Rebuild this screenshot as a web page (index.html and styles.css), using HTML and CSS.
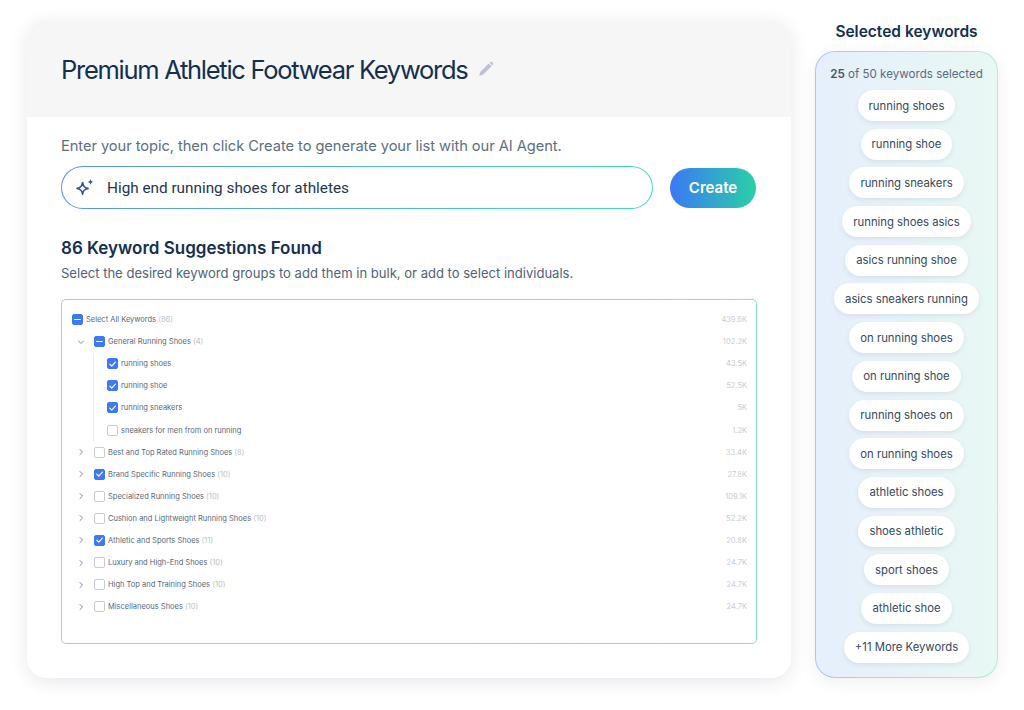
FILE: index.html
```html
<!DOCTYPE html>
<html lang="en">
<head>
<meta charset="utf-8">
<title>Premium Athletic Footwear Keywords</title>
<link rel="stylesheet" href="styles.css">
</head>
<body>
<svg class="defs" width="0" height="0" aria-hidden="true">
  <defs>
    <symbol id="check" viewBox="0 0 10 10"><path d="M2 5.2 4.2 7.4 8.2 2.8" fill="none" stroke="#fff" stroke-width="1.3" stroke-linecap="round" stroke-linejoin="round"/></symbol>
    <symbol id="right" viewBox="0 0 8 8"><path d="M3 1.5 5.5 4 3 6.5" fill="none" stroke="#7c8a9c" stroke-width="1" stroke-linecap="round" stroke-linejoin="round"/></symbol>
  </defs>
</svg>
<main class="page">
  <section class="card">
    <header class="card-head">
      <h1 class="title">Premium Athletic Footwear Keywords</h1>
      <svg class="pencil" viewBox="0 0 16 16" width="16" height="16"><path d="M1.2 14.8 2.2 11 10.8 2.4 13.6 5.2 5 13.8Z" fill="#bcc3cc"/><path d="M11.6 1.6 12.4.9a1 1 0 0 1 1.4 0l1.3 1.3a1 1 0 0 1 0 1.4l-.8.8Z" fill="#bcc3cc"/></svg>
    </header>
    <div class="card-body">
      <p class="lead">Enter your topic, then click Create to generate your list with our AI Agent.</p>
      <div class="search-row">
        <div class="search">
          <svg class="spark" viewBox="0 0 18 18" width="22" height="22"><path d="M7 4.5C7.5 7.6 8.4 8.5 11.5 9.3 8.4 10 7.5 11 7 14 6.500 11 5.600 10 2.500 9.300 5.600 8.500 6.500 7.600 7 4.500Z" fill="none" stroke="#3553b5" stroke-width="1.400" stroke-linejoin="round"/><path d="M13.500 1.500C13.800 3.200 14.300 3.700 16 4 14.300 4.300 13.800 4.800 13.500 6.500 13.200 4.800 12.700 4.300 11 4 12.700 3.700 13.200 3.200 13.500 1.500Z" fill="#3553b5"/></svg>
          <span class="search-text">High end running shoes for athletes</span>
        </div>
        <button class="create" type="button">Create</button>
      </div>
      <h2 class="found">86 Keyword Suggestions Found</h2>
      <p class="hint">Select the desired keyword groups to add them in bulk, or add to select individuals.</p>
      <div class="tree">
        <div class="row"><span class="box minus"></span><span class="label">Select All Keywords <i>(86)</i></span><span class="vol">439.6K</span></div>
        <div class="row l1"><svg class="chev" viewBox="0 0 8 8"><path d="M1.500 3 4 5.500 6.500 3" fill="none" stroke="#7c8a9c" stroke-width="1" stroke-linecap="round" stroke-linejoin="round"/></svg><span class="box minus"></span><span class="label">General Running Shoes <i>(4)</i></span><span class="vol">102.2K</span></div>
        <div class="children">
          <div class="row"><span class="box on"><svg><use href="#check"/></svg></span><span class="label">running shoes</span><span class="vol">43.5K</span></div>
          <div class="row"><span class="box on"><svg><use href="#check"/></svg></span><span class="label">running shoe</span><span class="vol">52.5K</span></div>
          <div class="row"><span class="box on"><svg><use href="#check"/></svg></span><span class="label">running sneakers</span><span class="vol">5K</span></div>
          <div class="row"><span class="box"></span><span class="label">sneakers for men from on running</span><span class="vol">1.2K</span></div>
        </div>
        <div class="row l1"><svg class="chev"><use href="#right"/></svg><span class="box"></span><span class="label">Best and Top Rated Running Shoes <i>(8)</i></span><span class="vol">33.4K</span></div>
        <div class="row l1"><svg class="chev"><use href="#right"/></svg><span class="box on"><svg><use href="#check"/></svg></span><span class="label">Brand Specific Running Shoes <i>(10)</i></span><span class="vol">27.8K</span></div>
        <div class="row l1"><svg class="chev"><use href="#right"/></svg><span class="box"></span><span class="label">Specialized Running Shoes <i>(10)</i></span><span class="vol">109.1K</span></div>
        <div class="row l1"><svg class="chev"><use href="#right"/></svg><span class="box"></span><span class="label">Cushion and Lightweight Running Shoes <i>(10)</i></span><span class="vol">52.2K</span></div>
        <div class="row l1"><svg class="chev"><use href="#right"/></svg><span class="box on"><svg><use href="#check"/></svg></span><span class="label">Athletic and Sports Shoes <i>(11)</i></span><span class="vol">20.8K</span></div>
        <div class="row l1"><svg class="chev"><use href="#right"/></svg><span class="box"></span><span class="label">Luxury and High-End Shoes <i>(10)</i></span><span class="vol">24.7K</span></div>
        <div class="row l1"><svg class="chev"><use href="#right"/></svg><span class="box"></span><span class="label">High Top and Training Shoes <i>(10)</i></span><span class="vol">24.7K</span></div>
        <div class="row l1"><svg class="chev"><use href="#right"/></svg><span class="box"></span><span class="label">Miscellaneous Shoes <i>(10)</i></span><span class="vol">24.7K</span></div>
      </div>
    </div>
  </section>
  <aside class="side">
    <h2 class="side-title">Selected keywords</h2>
    <div class="panel">
      <p class="count"><b>25</b> of 50 keywords selected</p>
      <ul class="chips">
        <li class="chip">running shoes</li>
        <li class="chip">running shoe</li>
        <li class="chip">running sneakers</li>
        <li class="chip">running shoes asics</li>
        <li class="chip">asics running shoe</li>
        <li class="chip">asics sneakers running</li>
        <li class="chip">on running shoes</li>
        <li class="chip">on running shoe</li>
        <li class="chip">running shoes on</li>
        <li class="chip">on running shoes</li>
        <li class="chip">athletic shoes</li>
        <li class="chip">shoes athletic</li>
        <li class="chip">sport shoes</li>
        <li class="chip">athletic shoe</li>
        <li class="chip">+11 More Keywords</li>
      </ul>
    </div>
  </aside>
</main>
</body>
</html>
```
FILE: styles.css
```css
* { box-sizing: border-box; }
html, body { margin: 0; padding: 0; }
body {
  width: 1024px;
  height: 710px;
  background: #fff;
  color: #14304f;
  font-family: "Inter", "Liberation Sans", sans-serif;
  overflow: hidden;
}
.defs { position: absolute; }
.page {
  display: flex;
  gap: 24px;
  padding: 20px 26px 0 27px;
  align-items: flex-start;
}
.card {
  width: 764px;
  height: 658px;
  border-radius: 20px;
  background: #fff;
  box-shadow: 0 4px 18px rgba(40, 50, 70, .11);
  overflow: hidden;
}
.card-head {
  height: 97px;
  background: #f6f6f7;
  display: flex;
  align-items: center;
  gap: 11px;
  padding: 3px 0 0 34px;
}
.title {
  margin: 0;
  font-size: 25.5px;
  font-weight: 400;
  letter-spacing: -1.28px;
  color: #12304f;
  line-height: 32px;
}
.pencil { margin-top: -3px; }
.card-body { padding: 19px 34px 0; }
.lead {
  margin: 0;
  font-size: 14.7px;
  line-height: 20px;
  color: #5c6f84;
  letter-spacing: -.07px;
}
.search-row {
  display: flex;
  align-items: center;
  gap: 17px;
  margin-top: 10px;
}
.search {
  width: 592px;
  height: 43px;
  border: 1.5px solid transparent;
  border-radius: 22px;
  background:
    linear-gradient(#fff, #fff) padding-box,
    linear-gradient(90deg, #5f8ff5, #43dcbc) border-box;
  display: flex;
  align-items: center;
  gap: 11px;
  padding-left: 12px;
}
.search-text {
  font-family: "Roboto", sans-serif;
  font-size: 15.3px;
  color: #1d3652;
}
.create {
  width: 86px;
  height: 40px;
  border: 0;
  border-radius: 20px;
  background: linear-gradient(90deg, #3b78f5, #2ad0a6);
  color: #fff;
  font: 600 15px "Inter", sans-serif;
  padding: 0;
}
.found {
  margin: 28px 0 0;
  font-size: 17px;
  line-height: 22px;
  font-weight: 600;
  color: #14304f;
}
.hint {
  margin: 5px 0 0;
  font-size: 13.05px;
  line-height: 18px;
  color: #4f6378;
}
.tree {
  margin-top: 17px;
  width: 696px;
  height: 345px;
  border: 1.5px solid transparent;
  border-radius: 5px;
  background:
    linear-gradient(#fff, #fff) padding-box,
    linear-gradient(90deg, #a9c5fb, #82e6cd) border-box;
  padding: 8.500px 9px 0 10px;
}
.row {
  display: flex;
  align-items: center;
  height: 22.100px;
  font-size: 7.500px;
  color: #56687c;
}
.l1 { padding-left: 5px; }
.chev {
  width: 8px;
  height: 8px;
  margin-right: 9px;
  flex: none;
}
.box {
  width: 11px;
  height: 11px;
  border-radius: 2px;
  border: 1px solid #c6ccd4;
  background: #fff;
  margin-right: 3px;
  flex: none;
  display: flex;
  align-items: center;
  justify-content: center;
  position: relative;
}
.box.on, .box.minus {
  background: #3f78f6;
  border-color: #3f78f6;
}
.box.on svg { width: 10px; height: 10px; }
.box.minus::after {
  content: "";
  width: 7px;
  height: 1.300px;
  background: #fff;
  border-radius: 1px;
}
.label { white-space: nowrap; }
.label i { font-style: normal; color: #b9c0c9; }
.vol {
  margin-left: auto;
  color: #c8cdd3;
  font-size: 7.500px;
}
.children {
  margin-left: 21px;
  padding-left: 13px;
  border-left: 1px solid #e9ebee;
}
.side {
  width: 183px;
  display: flex;
  flex-direction: column;
  align-items: stretch;
}
.side-title {
  margin: 3px 0 10px;
  font-size: 15.500px;
  line-height: 18px;
  font-weight: 600;
  text-align: center;
  color: #14304f;
}
.panel {
  height: 627px;
  border: 1px solid transparent;
  border-radius: 20px;
  background:
    linear-gradient(90deg, #e6effc, #e8f8f3) padding-box,
    linear-gradient(90deg, #acc4f8, #aeeed8) border-box;
  box-shadow: 0 4px 16px rgba(40, 50, 70, .08);
  padding: 14px 0 0;
}
.count {
  margin: 0;
  text-align: center;
  font-size: 11.600px;
  line-height: 16px;
  color: #5b6b7e;
}
.count b { font-weight: 600; color: #46566a; }
.chips {
  list-style: none;
  margin: 8px 0 0;
  padding: 0;
  display: flex;
  flex-direction: column;
  align-items: center;
  gap: 7.700px;
}
.chip {
  height: 31px;
  padding: 0 11px;
  border-radius: 16px;
  background: #fff;
  box-shadow: 0 2px 5px rgba(40, 60, 90, .09);
  display: flex;
  align-items: center;
  font-size: 11.300px;
  color: #34485e;
  white-space: nowrap;
}
```
